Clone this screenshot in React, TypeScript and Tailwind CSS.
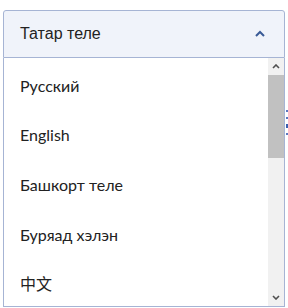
import React from "react";

const items = ["Русский", "English", "Башкорт теле", "Буряад хэлэн", "中文"];

export default function App() {
  return (
    <div className="relative w-[288px] h-[308px] bg-white overflow-hidden" style={{ fontFamily: "'Liberation Sans', Arial, sans-serif" }}>
      <div className="absolute left-[286px] top-[110px] flex flex-col gap-[5px]">
        <div className="w-[2px] h-[2px] bg-[#5a78c0]" />
        <div className="w-[2px] h-[2px] bg-[#5a78c0]" />
        <div className="w-[2px] h-[4px] bg-[#3b5fb0]" />
        <div className="w-[2px] h-[2px] bg-[#5a78c0]" />
      </div>
      <div className="pt-[10px] pl-[3px] w-[285px]">
        <div className="h-[48px] border border-[#a6b4d4] rounded-t-[3px] bg-[#f0f3fa] flex items-center justify-between pl-[16px] pr-[18px]">
          <span className="text-[16px] text-[#222]">Татар теле</span>
          <svg width="12" height="8" viewBox="0 0 12 8">
            <path d="M2 6 L6 2 L10 6" fill="none" stroke="#3a5a96" strokeWidth="2" />
          </svg>
        </div>
        <div className="h-[249px] border-x border-b border-[#a6b4d4] flex bg-white">
          <div className="flex-1 flex flex-col">
            {items.map((t) => (
              <div key={t} className="h-[50px] flex items-center pl-[16px] pt-[6px] text-[16px] text-[#222]" style={{ fontFamily: "Lato, 'Noto Sans CJK SC', sans-serif" }}>
                {t}
              </div>
            ))}
          </div>
          <div className="w-[16px] bg-[#f1f1f1] flex flex-col">
            <div className="h-[17px] flex items-center justify-center">
              <svg width="8" height="5" viewBox="0 0 8 5"><path d="M1 4 L4 1 L7 4" fill="none" stroke="#505050" strokeWidth="1.6" /></svg>
            </div>
            <div className="h-[83px] bg-[#c1c1c1]" />
            <div className="flex-1" />
            <div className="h-[17px] flex items-center justify-center">
              <svg width="8" height="5" viewBox="0 0 8 5"><path d="M1 1 L4 4 L7 1" fill="none" stroke="#505050" strokeWidth="1.6" /></svg>
            </div>
          </div>
        </div>
      </div>
    </div>
  );
}
